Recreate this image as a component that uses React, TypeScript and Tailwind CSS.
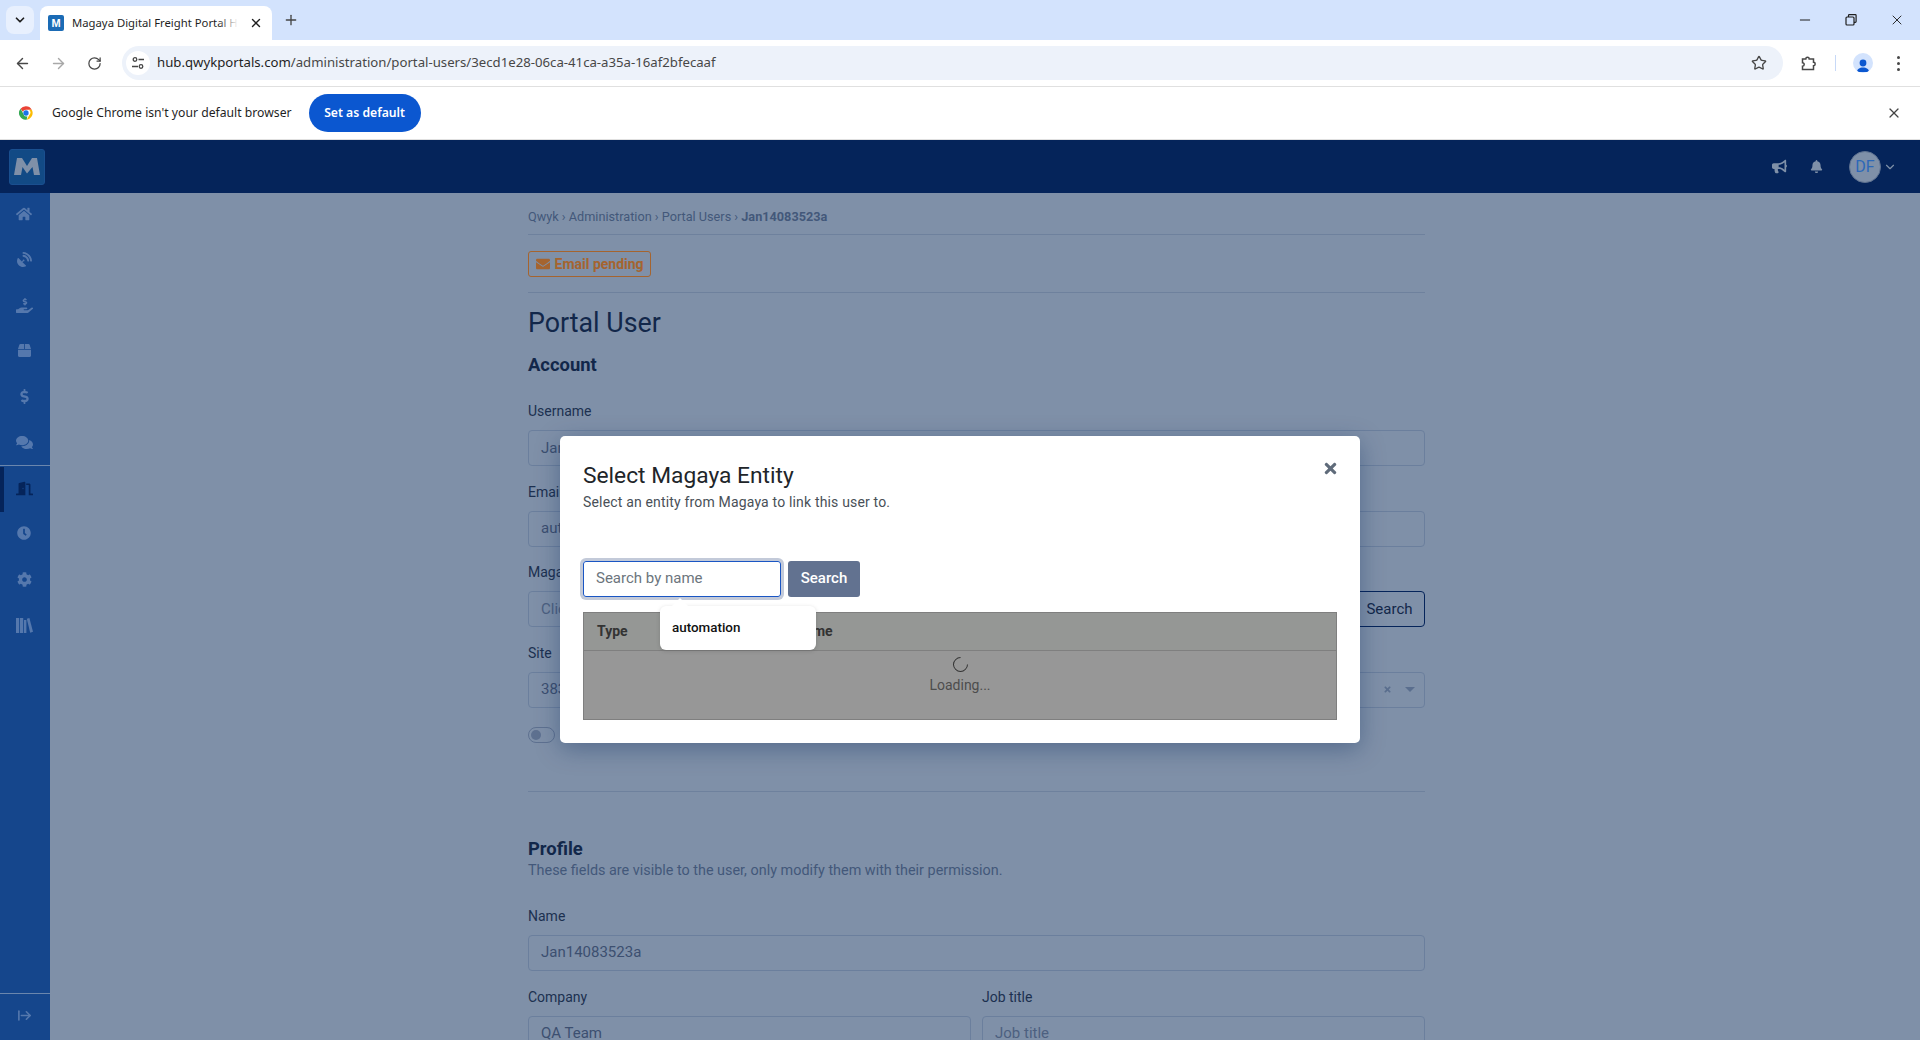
import React from "react";
import { ArrowLeft, ArrowRight, ArrowRightFromLine, ChevronDown, Minus, Plus, RotateCw, Star, X } from "lucide-react";
import {
  FaBell,
  FaBox,
  FaBullhorn,
  FaClock,
  FaCog,
  FaComments,
  FaDollarSign,
  FaDoorOpen,
  FaEnvelope,
  FaHandHoldingUsd,
  FaHome,
  FaSatelliteDish,
  FaTimes,
} from "react-icons/fa";

const roboto = "font-['Roboto',sans-serif]";

function ChromeLogo() {
  return (
    <svg width="16" height="16" viewBox="0 0 48 48">
      <path d="M24 4a20 20 0 0 1 17.3 10H24a10 10 0 0 0-9.4 6.6L7.6 11.5A20 20 0 0 1 24 4z" fill="#ea4335" />
      <path d="M41.3 14A20 20 0 0 1 26 43.9L34 30a10 10 0 0 0-1.3-16z" fill="#fbbc04" />
      <path d="M26 43.9A20 20 0 0 1 7.6 11.5L16 26a10 10 0 0 0 12 7.8z" fill="#34a853" />
      <circle cx="24" cy="24" r="8" fill="#1a73e8" />
    </svg>
  );
}

function BooksIcon() {
  return (
    <svg width="17" height="15" viewBox="0 0 17 15" fill="currentColor">
      <rect x="0" y="0" width="3.2" height="15" />
      <rect x="4" y="0" width="3.2" height="15" />
      <path d="M8 2h2.400v13H8z" />
      <path d="M10.800 0.800l2.600-.8 3.600 13.800-2.800.9z" />
    </svg>
  );
}

// brand mark of the header, wider than any installed bold M
function MagayaMark() {
  return (
    <svg width="26" height="17" viewBox="0 0 26 17" fill="#7f90a8">
      <path d="M0 17 3 0h5l5 8 5-8h5l3 17h-6l-1.500-8L13 15.500 8.500 9 7 17z" />
    </svg>
  );
}

function BrowserChrome() {
  return (
    <div className="font-['Noto_Sans',sans-serif] text-[#1f1f1f]">
      {/* tab strip */}
      <div className="flex h-10 items-end bg-[#d3e3fd] pl-[6px]">
        <div className="mb-[6px] flex h-7 w-7 items-center justify-center rounded-lg bg-[#e8f0fe]">
          <ChevronDown size={14} strokeWidth={3} />
        </div>
        <div className="ml-[6px] flex h-[34px] w-[232px] items-center rounded-t-lg bg-white pl-2">
          <div className="flex h-4 w-4 items-center justify-center rounded-[2px] bg-[#1b6bb5] font-['Liberation_Sans',sans-serif] text-[11px] font-bold text-white">
            M
          </div>
          <div className="relative ml-2 w-[166px] overflow-hidden whitespace-nowrap text-[11.3px]">
            Magaya Digital Freight Portal Hub
            <div className="absolute inset-y-0 right-0 w-5 bg-gradient-to-r from-transparent to-white" />
          </div>
          <X size={14} strokeWidth={2.4} className="ml-[11px]" />
        </div>
        <div className="mb-[6px] ml-[11px] flex h-7 items-center">
          <Plus size={16} strokeWidth={2} className="text-[#444]" />
        </div>
        <div className="mb-[11px] ml-auto flex h-[18px] items-center gap-[30px] pr-[15px]">
          <Minus size={16} strokeWidth={1.5} />
          <svg width="16" height="16" viewBox="0 0 16 16" fill="none" stroke="currentColor" strokeWidth="1.2">
            <rect x="3" y="5" width="8" height="8" rx="1" />
            <path d="M5.500 5V3.500a.8.8 0 0 1 .8-.8h6a.8.8 0 0 1 .8.8v6a.8.8 0 0 1-.8.8H11" />
          </svg>
          <X size={16} strokeWidth={1.4} />
        </div>
      </div>
      {/* toolbar */}
      <div className="flex h-[47px] items-center border-b border-[#e0e0e0] bg-white pl-[14px]">
        <ArrowLeft size={17} strokeWidth={2} className="text-[#474747]" />
        <ArrowRight size={17} strokeWidth={2} className="ml-[19px] text-[#a8a8a8]" />
        <RotateCw size={15} strokeWidth={2} className="ml-[20px] text-[#474747]" />
        <div className="ml-[20px] flex h-[34px] w-[1661px] items-center rounded-full bg-[#edf2fa] pl-1">
          <div className="flex h-6 w-6 items-center justify-center rounded-full bg-white">
            <svg width="14" height="14" viewBox="0 0 14 14" fill="none" stroke="#444" strokeWidth="1.3">
              <circle cx="4" cy="3.500" r="1.800" />
              <path d="M7.500 3.500H13M1 10.500h6" />
              <circle cx="10" cy="10.500" r="1.800" />
            </svg>
          </div>
          <div className="ml-[7px] whitespace-nowrap text-[13.2px] text-[#1f1f1f]">
            hub.qwykportals.com<span className="text-[#474747]">/administration/portal-users/3ecd1e28-06ca-41ca-a35a-16af2bfecaaf</span>
          </div>
          <Star size={16} strokeWidth={2} className="ml-auto mr-[16px] text-[#474747]" />
        </div>
        <svg width="16" height="16" viewBox="0 0 16 16" fill="none" stroke="#474747" strokeWidth="1.500" className="ml-[18px]">
          <path d="M1.500 4h3.300a1.700 1.700 0 0 1 3.400 0h4.300v3.300a1.700 1.700 0 0 1 0 3.400v3.800H1.500v-3.300a1.700 1.700 0 0 0 0-3.400z" />
        </svg>
        <div className="ml-[18px] h-[16px] w-[1px] bg-[#c7d9f7]" />
        <div className="ml-[17px] flex h-5 w-5 items-end justify-center overflow-hidden rounded-full bg-[#d3e3fd]">
          <svg width="14" height="15" viewBox="0 0 14 15" fill="#0b57d0">
            <circle cx="7" cy="5" r="3.400" />
            <path d="M1 14c0-3 2.500-4.500 6-4.500s6 1.500 6 4.500z" />
          </svg>
        </div>
        <div className="ml-[24px] flex flex-col gap-[3px]">
          <div className="h-[3px] w-[3px] rounded-full bg-[#474747]" />
          <div className="h-[3px] w-[3px] rounded-full bg-[#474747]" />
          <div className="h-[3px] w-[3px] rounded-full bg-[#474747]" />
        </div>
      </div>
      {/* default browser bar */}
      <div className="flex h-[53px] items-center border-b border-[#e0e0e0] bg-white pl-[18px] pr-[18px]">
        <ChromeLogo />
        <span className="ml-[18px] text-[12.2px]">Google Chrome isn't your default browser</span>
        <button className="ml-[17px] flex h-[38px] w-[112px] items-center justify-center rounded-full bg-[#0b57d0] text-[12.2px] font-semibold text-white">
          Set as default
        </button>
        <X size={16} strokeWidth={1.8} className="ml-auto text-[#444]" />
      </div>
    </div>
  );
}

function TopNav() {
  return (
    <div className="flex h-[53px] items-center bg-[#05245a] pl-[9px] pr-[23px]">
      <div className="flex h-9 w-9 items-center justify-center rounded-[3px] border border-[#1a4f8f] bg-[#124a85]">
        <MagayaMark />
      </div>
      <FaBullhorn size={15} className="ml-auto text-[#7f90a8]" />
      <FaBell size={13} className="ml-[23px] text-[#7f90a8]" />
      <div className={`ml-[26px] flex h-8 w-8 items-center justify-center rounded-full border border-[#5e7190] bg-[#7f90a8] text-base text-[#2c68b8] ${roboto}`}>
        DF
      </div>
      <ChevronDown size={14} strokeWidth={2} className="ml-[2px] text-[#7f90a8]" />
    </div>
  );
}

function Sidebar() {
  const top = [
    <FaHome size={16} />,
    <FaSatelliteDish size={15} />,
    <FaHandHoldingUsd size={17} />,
    <FaBox size={13} />,
    <FaDollarSign size={15} />,
    <FaComments size={17} />,
  ];
  const bottom = [<FaClock size={14} />, <FaCog size={15} />, <BooksIcon />];
  return (
    <div className="flex w-[50px] shrink-0 flex-col bg-[#15468c] text-[#5578ad]">
      <div className="-mt-[2px] flex flex-col">
        {top.map((icon, i) => (
          <div key={i} className="flex h-[45.700px] items-center justify-center pr-[2px]">
            {icon}
          </div>
        ))}
      </div>
      <div className="h-[1px] bg-[#6a86ad]" />
      <div className="relative flex h-[44px] items-center justify-center pr-[2px] text-[#05245a]">
        <div className="absolute left-0 top-[1px] h-[45px] w-1 bg-[#05245a]" />
        <FaDoorOpen size={17} />
      </div>
      {bottom.map((icon, i) => (
        <div key={i} className="flex h-[46px] items-center justify-center pr-[2px]">
          {icon}
        </div>
      ))}
      <div className="mt-auto flex h-[47px] items-center justify-center border-t border-[#6a86ad] pb-[3px] pr-[2px]">
        <ArrowRightFromLine size={15} strokeWidth={2.6} />
      </div>
    </div>
  );
}

function Field({ label, value, placeholder, className = "", children }: { label: string; value?: string; placeholder?: boolean; className?: string; children?: React.ReactNode }) {
  return (
    <div className={className}>
      <div className="mb-2 text-sm leading-[21px] text-[#1c3050]">{label}</div>
      <div className="flex h-9 items-center justify-between rounded-[4px] border border-[#6b7f9d] pl-3 pr-2 text-[15px] text-[#3c4f70]">
        <span className={placeholder ? "text-[#4d6080]" : ""}>{value}</span>
        {children}
      </div>
    </div>
  );
}

function PageContent() {
  return (
    <div className={`ml-[478px] w-[897px] ${roboto}`}>
      <div className="flex h-[42px] items-center border-b border-[#6e819d] pt-[6px] text-[12.7px] text-[#43587a]">
        Qwyk › Administration › Portal Users ›&nbsp;<span className="font-bold">Jan14083523a</span>
      </div>
      <div className="flex h-[58px] items-center border-b border-[#6e819d]">
        <div className="flex h-[26px] items-center gap-[5px] rounded-[3px] border border-[#a5642f] px-[6.500px] text-sm font-bold text-[#a5642f]">
          <FaEnvelope size={14} />
          Email pending
        </div>
      </div>
      <h1 className="mt-[13px] text-[26.8px] font-normal leading-[34px] text-[#12274a]">Portal User</h1>
      <h2 className="mt-[14px] text-[18.4px] font-bold leading-[22px] text-[#12274a]">Account</h2>
      <div className="mt-[25px] flex flex-col gap-[15.500px]">
        <Field label="Username" value="Jan14083523a" />
        <Field label="Email" value="automation@qwyk.io" />
        <div>
          <div className="mb-2 text-sm leading-[21px] text-[#1c3050]">Magaya Entity</div>
          <div className="flex h-9">
            <div className="flex flex-1 items-center rounded-l-[4px] border border-[#6b7f9d] pl-3 text-[15px] text-[#4d6080]">Click search to select</div>
            <button className="-ml-[1px] h-9 w-[71px] rounded-r-[4px] border border-[#05245a] text-[15px] text-[#12274a]">Search</button>
          </div>
        </div>
        <Field label="Site" value="383">
          <span className="flex items-center gap-[13px] pr-[1px] text-[#5a6e8e]">
            <FaTimes size={9} />
            <span className="h-0 w-0 border-x-[5px] border-t-[5px] border-x-transparent border-t-[#5a6e8e]" />
          </span>
        </Field>
      </div>
      <div className="mt-[19.500px] h-[16px] w-[27px] rounded-full border border-[#5e7190] p-[2px]">
        <div className="h-[10px] w-[10px] rounded-full bg-[#5e7190]" />
      </div>
      <div className="mt-[47.500px] border-t border-[#6e819d]" />
      <h2 className="mt-[45px] text-[18.4px] font-bold leading-[24px] text-[#12274a]">Profile</h2>
      <div className="text-[14.4px] leading-[20px] text-[#43587a]">These fields are visible to the user, only modify them with their permission.</div>
      <Field label="Name" value="Jan14083523a" className="mt-[25px]" />
      <div className="mt-4 grid grid-cols-2 gap-[11px]">
        <Field label="Company" value="QA Team" />
        <Field label="Job title" value="Job title" placeholder />
      </div>
    </div>
  );
}

function EntityModal() {
  return (
    <div className={`absolute left-[560px] top-[436px] h-[307px] w-[800px] rounded-[5px] bg-white px-[23px] pt-[25px] shadow-[0_6px_24px_rgba(5,36,90,0.35)] ${roboto}`}>
      <FaTimes size={17} className="absolute right-[21px] top-[24px] text-[#5f6b7a]" />
      <div className="text-[22.75px] leading-[30px] text-[#212529]">Select Magaya Entity</div>
      <div className="mt-[1px] text-sm leading-[20px] tracking-[0.17px] text-[#495057]">Select an entity from Magaya to link this user to.</div>
      <div className="mt-[48.500px] flex gap-[7px]">
        <div className="flex h-9 w-[198px] items-center rounded-[3px] border border-[#1a56c4] pl-3 text-[15px] text-[#6c757d] shadow-[0_0_0_3px_#c3cad9]">
          Search by name
        </div>
        <button className="h-9 w-[72px] rounded-[3px] bg-[#627290] text-[15px] font-medium text-white">Search</button>
      </div>
      <div className="mt-[15px] h-[108px] border border-[#7f7f7f] bg-[#979797] text-sm text-[#333]">
        <div className="flex h-[38px] items-center gap-[168px] border-b border-[#7f7f7f] bg-[#959795] pl-[13px] font-bold">
          <span>Type</span>
          <span>Name</span>
        </div>
        <div className="flex flex-col items-center pt-[6px] text-[#4d4d4d]">
          <div className="h-[15px] w-[15px] -rotate-45 rounded-full border-[1.500px] border-[#333] border-r-transparent" />
          <div className="mt-[3px] leading-[21px]">Loading...</div>
        </div>
      </div>
      {/* tooltip on the search input */}
      <div className="absolute left-[100px] top-[170px] h-[44px] w-[156px] rounded-[6px] bg-white pl-3 pt-[12px] text-[13.4px] font-medium leading-[20px] text-[#111] shadow-[0_1px_4px_rgba(0,0,0,0.15)]">
        automation
        <div className="absolute -top-[8px] left-[12px] h-0 w-0 border-x-[8px] border-b-[8px] border-x-transparent border-b-white" />
      </div>
    </div>
  );
}

export default function App() {
  return (
    <div className="relative flex h-[1040px] w-[1920px] flex-col overflow-hidden bg-[#7f90a8]">
      <BrowserChrome />
      <TopNav />
      <div className="flex min-h-0 flex-1">
        <Sidebar />
        <PageContent />
      </div>
      <EntityModal />
    </div>
  );
}
